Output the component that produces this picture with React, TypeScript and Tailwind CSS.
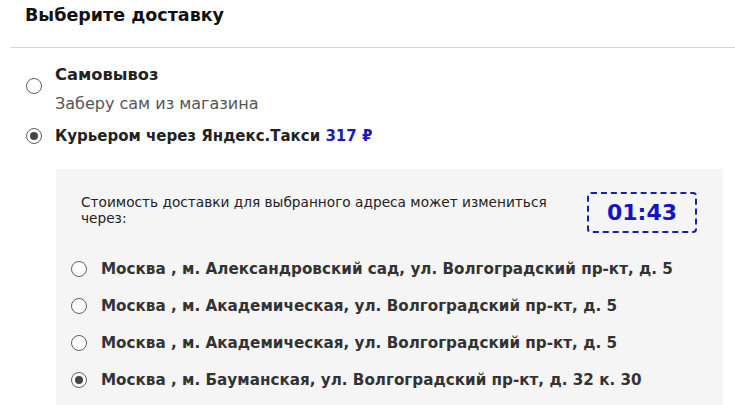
import React from "react";

function Radio({ checked, className = "" }: { checked?: boolean; className?: string }) {
  return (
    <span className={`flex h-[16px] w-[16px] shrink-0 items-center justify-center rounded-full border border-[#5f5f5f] bg-white ${className}`}>
      {checked && <span className="h-[8px] w-[8px] rounded-full bg-[#444]" />}
    </span>
  );
}

const addresses = [
  { text: "Москва , м. Александровский сад, ул. Волгоградский пр-кт, д. 5", checked: false },
  { text: "Москва , м. Академическая, ул. Волгоградский пр-кт, д. 5", checked: false },
  { text: "Москва , м. Академическая, ул. Волгоградский пр-кт, д. 5", checked: false },
  { text: "Москва , м. Бауманская, ул. Волгоградский пр-кт, д. 32 к. 30", checked: true },
];

export default function App() {
  return (
    <div className="h-[405px] w-[735px] overflow-hidden bg-white" style={{ fontFamily: '"DejaVu Sans", sans-serif' }}>
      <div className="pl-[25px] pt-[2px]">
        <h1 className="text-[17.5px] font-bold leading-[26px] text-[#111]">Выберите доставку</h1>
      </div>
      <div className="ml-[11px] mt-[19px] h-px bg-[#d4d4d4]" />

      <div className="pl-[26px] pt-[17px]">
        <div className="flex items-start gap-[13px]">
          <Radio className="mt-[13px]" />
          <div>
            <div className="text-[16.3px] font-bold leading-[20px] text-[#222]">Самовывоз</div>
            <div className="mt-[9px] text-[16px] leading-[20px] text-[#555]">Заберу сам из магазина</div>
          </div>
        </div>
        <div className="mt-[12px] flex items-center gap-[13px]">
          <Radio checked />
          <div className="text-[15px] font-bold leading-[20px] text-[#222]">
            Курьером через Яндекс.Такси <span className="text-[#1b1bb5]">317 ₽</span>
          </div>
        </div>
      </div>

      <div className="ml-[56px] mt-[23px] w-[667px] bg-[#f5f5f5] pb-[20px] pt-[25px]">
        <div className="flex items-start justify-between pl-[25px] pr-[26px]">
          <p className="w-[480px] text-[13.7px] leading-[16px] text-[#222]">
            Стоимость доставки для выбранного адреса может измениться через:
          </p>
          <div className="-mt-[2px] flex h-[41px] w-[110px] items-center justify-center rounded-[4px] border-2 border-dashed border-[#1b1bb5]">
            <span className="text-[22px] font-bold text-[#1414c4]">01:43</span>
          </div>
        </div>
        <div className="mt-[26px] flex flex-col gap-[17px] pl-[15px]">
          {addresses.map((a, i) => (
            <div key={i} className="flex items-center gap-[14px]">
              <Radio checked={a.checked} />
              <span className="text-[15.2px] font-bold leading-[20px] text-[#333]">{a.text}</span>
            </div>
          ))}
        </div>
      </div>
    </div>
  );
}
